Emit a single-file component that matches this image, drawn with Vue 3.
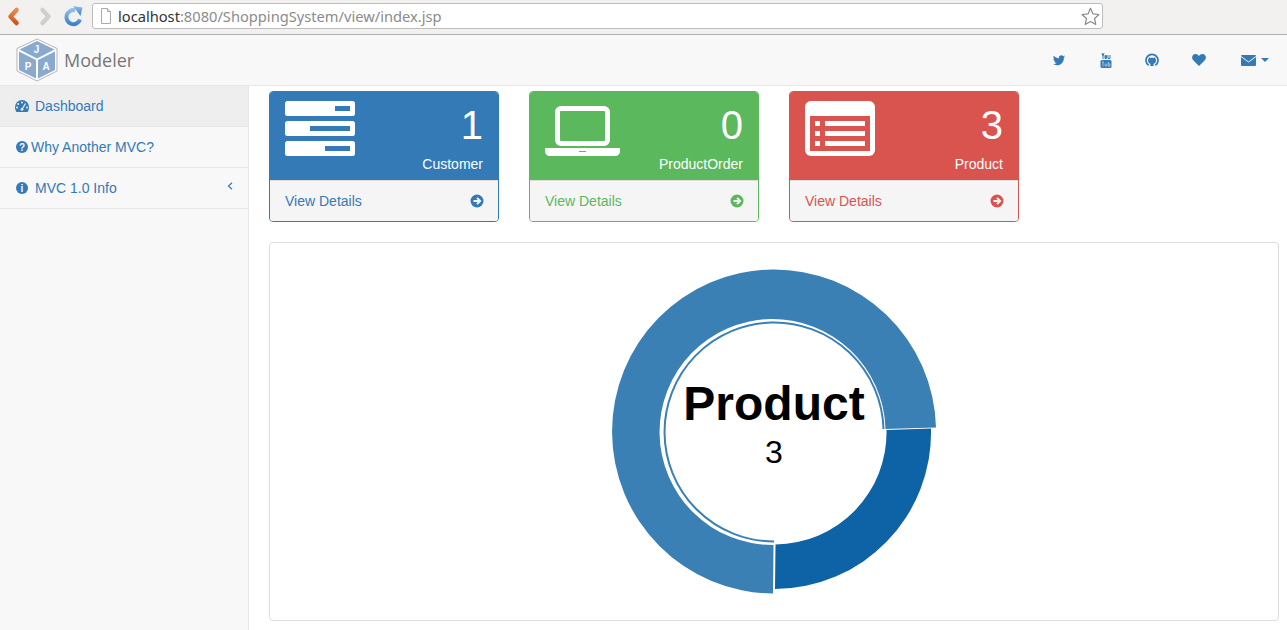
<script setup>
const cards = [
  { kind: 'customer', count: 1, label: 'Customer', cls: 'blue' },
  { kind: 'order', count: 0, label: 'ProductOrder', cls: 'green' },
  { kind: 'product', count: 3, label: 'Product', cls: 'red' }
]
const productRows = [20, 30, 40]
</script>

<template>
  <div class="page">
    <div class="toolbar">
      <svg class="nav-icons" width="84" height="24" viewBox="0 0 84 24">
        <defs>
          <linearGradient id="backGrad" x1="0" y1="0" x2="0" y2="1">
            <stop offset="0" stop-color="#e98a4c" />
            <stop offset="1" stop-color="#d2541f" />
          </linearGradient>
          <linearGradient id="reloadGrad" x1="0" y1="0" x2="0" y2="1">
            <stop offset="0" stop-color="#8fbde6" />
            <stop offset="1" stop-color="#3f82c8" />
          </linearGradient>
        </defs>
        <path d="M12.5 5 L6.5 11.5 L12.5 18" fill="none" stroke="url(#backGrad)" stroke-width="4.5" stroke-linejoin="round" stroke-linecap="round" />
        <path d="M38.5 5 L44.5 11.5 L38.5 18" fill="none" stroke="#d0cfcc" stroke-width="4.5" stroke-linejoin="round" stroke-linecap="round" />
        <path d="M76 14.5 A7 7 0 1 1 71 5.3" fill="none" stroke="url(#reloadGrad)" stroke-width="4" />
        <path d="M69 1 L78.5 2.5 L76.5 11 Z" fill="url(#reloadGrad)" />
      </svg>
      <div class="address">
        <svg class="file-icon" width="10" height="16" viewBox="0 0 10 16">
          <path d="M.5.5H6.5L9.5 3.5V15.5H.5Z" fill="#fff" stroke="#a9a9a9" />
          <path d="M6.5.5V3.5H9.5" fill="#e8e8e8" stroke="#a9a9a9" />
        </svg>
        <span class="url"><span class="host">localhost</span>:8080/ShoppingSystem/view/index.jsp</span>
        <svg class="star" width="19" height="19" viewBox="0 0 19 19">
          <path d="M9.5 1.3 L12 6.9 L18 7.5 L13.5 11.5 L14.8 17.5 L9.5 14.4 L4.2 17.5 L5.5 11.5 L1 7.5 L7 6.9 Z" fill="#fff" stroke="#8a8a8a" stroke-width="1.2" stroke-linejoin="round" />
        </svg>
      </div>
    </div>

    <nav class="navbar">
      <div class="brand">
        <svg width="44" height="44" viewBox="0 0 44 44">
          <path d="M22 1 L42 10.5 L42 33 L22 43 L2 33 L2 10.5 Z" fill="#fff" stroke="#b5b5b5" />
          <path d="M22 3 L39.5 11.5 L22 20.5 L4.5 11.5 Z" fill="#89a9cf" />
          <path d="M4 13.5 L21 22 L21 40.5 L4 32 Z" fill="#89a9cf" />
          <path d="M23 22 L40 13.5 L40 32 L23 40.5 Z" fill="#89a9cf" />
          <text x="21.5" y="14.5" class="cube-letter">J</text>
          <text x="13" y="32" class="cube-letter">P</text>
          <text x="31" y="32" class="cube-letter">A</text>
        </svg>
        <span class="brand-name">Modeler</span>
      </div>
      <div class="nav-links">
        <svg class="twitter" width="14" height="14" viewBox="0 0 24 24">
          <path d="M22.46,6C21.69,6.35 20.86,6.58 20,6.69C20.88,6.16 21.56,5.32 21.88,4.31C21.05,4.81 20.13,5.16 19.16,5.36C18.37,4.5 17.26,4 16,4C13.65,4 11.73,5.92 11.73,8.29C11.73,8.63 11.77,8.96 11.84,9.27C8.28,9.09 5.11,7.38 3,4.79C2.63,5.42 2.42,6.16 2.42,6.94C2.42,8.43 3.17,9.75 4.33,10.5C3.62,10.5 2.96,10.3 2.38,10C2.38,10 2.38,10 2.38,10.03C2.38,12.11 3.86,13.85 5.82,14.24C5.46,14.34 5.08,14.39 4.69,14.39C4.42,14.39 4.15,14.36 3.89,14.31C4.43,16 6,17.26 7.89,17.29C6.43,18.45 4.58,19.13 2.56,19.13C2.22,19.13 1.88,19.11 1.54,19.07C3.44,20.29 5.7,21 8.12,21C16,21 20.33,14.46 20.33,8.79C20.33,8.6 20.33,8.42 20.32,8.23C21.16,7.63 21.88,6.87 22.46,6Z" />
        </svg>
        <svg class="youtube" width="12" height="15" viewBox="0 0 12 15">
          <path d="M2 0 L3 3 L4 0 M3 3 V6" fill="none" stroke="#337ab7" stroke-width="1" />
          <rect x="4.5" y="2" width="2.5" height="4" rx="1" fill="#337ab7" />
          <path d="M8 2 V5.5 H10 V2" fill="none" stroke="#337ab7" stroke-width="1" />
          <rect x="0.5" y="7" width="11" height="8" rx="1.5" fill="#337ab7" />
          <path d="M2 9 H4 M3 9 V13.5 M5.2 10.5 V13 H6.8 V10.5 M8.3 8.7 V13.2 H10 V10.8 H8.3" fill="none" stroke="#b9d0e6" stroke-width=".8" />
        </svg>
        <svg class="github" width="14" height="14" viewBox="0 0 14 14">
          <path d="M3.6 12.3 A6 6 0 1 1 10.4 12.3" fill="none" stroke="#337ab7" stroke-width="1.7" />
          <path d="M5.4 13 V10.8 C3.6 10.4 3 9.2 3 7.6 C3 6.9 3.2 6.3 3.7 5.8 C3.6 5.3 3.6 4.7 3.9 4.2 C4.5 4.2 5 4.5 5.5 4.9 C6.4 4.7 7.6 4.7 8.5 4.9 C9 4.5 9.5 4.2 10.1 4.2 C10.4 4.7 10.4 5.3 10.3 5.8 C10.8 6.3 11 6.9 11 7.6 C11 9.2 10.4 10.4 8.6 10.8 V13 Z" />
        </svg>
        <svg class="heart" width="14" height="12" viewBox="0 0 14 12">
          <path d="M7 12 L1 6 C-1 3.5 .5 0 3.5 0 C5 0 6.2 .8 7 2 C7.8 .8 9 0 10.5 0 C13.5 0 15 3.5 13 6 Z" />
        </svg>
        <div class="mail">
          <svg width="15" height="11" viewBox="0 0 15 11">
            <rect width="15" height="11" rx="1" fill="#337ab7" />
            <path d="M0 1.5 L7.5 7 L15 1.5" fill="none" stroke="#f8f8f8" stroke-width="1" />
          </svg>
          <span class="caret"></span>
        </div>
      </div>
    </nav>

    <div class="main">
      <aside class="sidebar">
        <a class="side-item active">
          <svg class="side-icon" width="14" height="12" viewBox="0 0 14 12">
            <path d="M7 0 A7 7 0 0 1 14 7 C14 9 13.5 10.5 12.6 12 H1.4 C.5 10.5 0 9 0 7 A7 7 0 0 1 7 0 Z" fill="#337ab7" />
            <circle cx="7" cy="2.5" r="1" fill="#eee" />
            <circle cx="3.2" cy="4" r="1" fill="#eee" />
            <circle cx="2" cy="7.5" r="1" fill="#eee" />
            <circle cx="12" cy="7.5" r="1" fill="#eee" />
            <path d="M10.5 3.5 L7.5 8.5" stroke="#eee" stroke-width="1.3" />
            <circle cx="7" cy="9.3" r="1.4" fill="#eee" />
          </svg>
          <span class="gap-six">Dashboard</span>
        </a>
        <a class="side-item">
          <svg class="side-icon small" width="12" height="12" viewBox="0 0 12 12">
            <circle cx="6" cy="6" r="6" fill="#337ab7" />
            <text x="6" y="9.6" class="badge-glyph">?</text>
          </svg>
          <span class="gap-three">Why Another MVC?</span>
        </a>
        <a class="side-item">
          <svg class="side-icon small" width="12" height="12" viewBox="0 0 12 12">
            <circle cx="6" cy="6" r="6" fill="#337ab7" />
            <text x="6" y="9.6" class="badge-glyph">i</text>
          </svg>
          <span class="gap-seven">MVC 1.0 Info</span>
          <svg class="angle" width="6" height="8" viewBox="0 0 6 8">
            <path d="M5 .8 L1.5 4 L5 7.2" fill="none" stroke="#337ab7" stroke-width="1.2" />
          </svg>
        </a>
      </aside>

      <section class="content">
        <div class="cards">
          <div v-for="card in cards" :key="card.kind" class="card" :class="card.cls">
            <div class="card-head">
              <svg class="card-icon" width="76" height="55" viewBox="0 0 76 55">
                <template v-if="card.kind === 'customer'">
                  <rect width="70" height="15" rx="2.5" fill="#fff" />
                  <rect y="20" width="70" height="15" rx="2.5" fill="#fff" />
                  <rect y="40" width="70" height="15" rx="2.5" fill="#fff" />
                  <rect x="50" y="5" width="15" height="5" fill="#337ab7" />
                  <rect x="25" y="25" width="40" height="5" fill="#337ab7" />
                  <rect x="40" y="45" width="25" height="5" fill="#337ab7" />
                </template>
                <template v-else-if="card.kind === 'order'">
                  <rect x="12.5" y="7.5" width="50" height="35" rx="3.5" fill="none" stroke="#fff" stroke-width="5" />
                  <path d="M0 47 H75 V50 C75 53 73 55 70 55 H5 C2 55 0 53 0 50 Z" fill="#fff" />
                  <rect x="34" y="50" width="7" height="1" fill="#5cb85c" />
                </template>
                <template v-else>
                  <rect width="70" height="55" rx="6" fill="#fff" />
                  <rect x="5" y="15" width="60" height="35" fill="#d9534f" />
                  <template v-for="y in productRows" :key="y">
                    <rect x="10" :y="y" width="5" height="5" fill="#fff" />
                    <rect x="20" :y="y" width="40" height="5" fill="#fff" />
                  </template>
                </template>
              </svg>
              <div class="card-text">
                <div class="count">{{ card.count }}</div>
                <div class="label">{{ card.label }}</div>
              </div>
            </div>
            <div class="card-foot">
              <span>View Details</span>
              <svg class="go" width="14" height="14" viewBox="0 0 14 14">
                <circle cx="7" cy="7" r="6.5" class="go-disc" />
                <path d="M3.5 7 H10 M7 3.8 L10.2 7 L7 10.2" fill="none" stroke="#f5f5f5" stroke-width="1.9" />
              </svg>
            </div>
          </div>
        </div>

        <div class="chart-panel">
          <svg width="340" height="340" viewBox="0 0 340 340">
            <path d="M332 165.5 A162 162 0 1 0 169 331.5 L169.5 283 A113 113 0 1 1 281.5 167 Z" fill="#3b80b4" />
            <path d="M282.5 168 L327 166.5 A156.5 156.5 0 0 1 171 327 L171.5 282.5 A112 112 0 0 0 282.5 168 Z" fill="#0d63a6" />
            <path d="M279.5 167 A109.5 109.5 0 1 0 170 279.5" fill="none" stroke="#3b80b4" stroke-width="2" />
            <text x="170" y="158" class="center-title">Product</text>
            <text x="170" y="201" class="center-value">3</text>
          </svg>
        </div>
      </section>
    </div>
  </div>
</template>

<style scoped>
.page {
  width: 1287px;
  height: 630px;
  display: flex;
  flex-direction: column;
  overflow: hidden;
  background: #fff;
  font-family: "Liberation Sans", Arial, sans-serif;
  font-size: 14px;
  color: #333;
}

.toolbar {
  height: 34px;
  flex: none;
  display: flex;
  align-items: center;
  background: #f2f1f0;
  border-bottom: 1px solid #b0b0b0;
  box-sizing: content-box;
}

.nav-icons {
  flex: none;
  margin-left: 4px;
  margin-right: 4px;
}

.address {
  width: 1011px;
  height: 26px;
  margin-bottom: 2px;
  display: flex;
  align-items: center;
  box-sizing: border-box;
  padding: 0 2px 0 8px;
  background: #fff;
  border: 1px solid #bdbdbd;
  border-radius: 3px;
}

.file-icon {
  flex: none;
}

.url {
  margin-left: 7px;
  flex: 1;
  font-family: "Noto Sans", "Open Sans", sans-serif;
  font-size: 14.66px;
  color: #8b8b8b;
  white-space: nowrap;
}

.host {
  color: #2e3436;
}

.star {
  flex: none;
}

.navbar {
  height: 50px;
  flex: none;
  display: flex;
  align-items: center;
  justify-content: space-between;
  background: #f8f8f8;
  border-bottom: 1px solid #e7e7e7;
}

.brand {
  display: flex;
  align-items: center;
  margin-left: 15px;
}

.brand-name {
  margin-left: 5px;
  font-family: "Open Sans", sans-serif;
  font-size: 18px;
  color: #777;
}

.cube-letter {
  font-family: "Liberation Sans", sans-serif;
  font-size: 10px;
  font-weight: bold;
  fill: #fff;
  text-anchor: middle;
}

.nav-links {
  display: flex;
  align-items: center;
  margin-right: 18px;
}

.nav-links svg {
  fill: #337ab7;
  flex: none;
}

.twitter {
  margin-right: 34px;
}

.youtube {
  margin-right: 33px;
}

.github {
  margin-right: 33px;
}

.heart {
  margin-right: 35px;
}

.mail {
  display: flex;
  align-items: center;
}

.caret {
  width: 0;
  height: 0;
  margin-left: 5px;
  border-top: 4px solid #337ab7;
  border-left: 4px solid transparent;
  border-right: 4px solid transparent;
}

.main {
  flex: 1;
  display: flex;
  min-height: 0;
}

.sidebar {
  width: 249px;
  flex: none;
  box-sizing: border-box;
  background: #f8f8f8;
  border-right: 1px solid #e7e7e7;
}

.side-item {
  height: 41px;
  box-sizing: border-box;
  display: flex;
  align-items: center;
  padding-left: 15px;
  color: #337ab7;
  border-bottom: 1px solid #e7e7e7;
}

.side-item.active {
  background: #eee;
}

.side-icon {
  flex: none;
}

.side-icon.small {
  margin-left: 1px;
}

.badge-glyph {
  font-family: "Liberation Sans", sans-serif;
  font-size: 10px;
  font-weight: bold;
  fill: #f8f8f8;
  text-anchor: middle;
}

.gap-six {
  margin-left: 6px;
}

.gap-three {
  margin-left: 3px;
}

.gap-seven {
  margin-left: 7px;
}

.angle {
  margin-left: auto;
  margin-right: 15px;
  margin-bottom: 4px;
}

.content {
  flex: 1;
  min-width: 0;
  padding: 5px 8px 0 20px;
}

.cards {
  display: flex;
  gap: 30px;
}

.card {
  width: 230px;
  box-sizing: border-box;
  border: 1px solid;
  border-radius: 4px;
  overflow: hidden;
}

.card-head {
  height: 88px;
  box-sizing: border-box;
  display: flex;
  justify-content: space-between;
  padding: 9px 15px 0;
  color: #fff;
}

.card-text {
  text-align: right;
}

.count {
  font-size: 40px;
  line-height: 44px;
  margin-top: 2px;
}

.label {
  margin-top: 9px;
  line-height: 16px;
}

.card-foot {
  height: 41px;
  box-sizing: border-box;
  display: flex;
  align-items: center;
  justify-content: space-between;
  padding: 0 14px 0 15px;
  background: #f5f5f5;
  border-top: 1px solid #ddd;
}

.blue {
  border-color: #337ab7;
}

.blue .card-head {
  background: #337ab7;
}

.blue .card-foot {
  color: #337ab7;
}

.blue .go-disc {
  fill: #337ab7;
}

.green {
  border-color: #5cb85c;
}

.green .card-head {
  background: #5cb85c;
}

.green .card-foot {
  color: #5cb85c;
}

.green .go-disc {
  fill: #5cb85c;
}

.red {
  border-color: #d9534f;
}

.red .card-head {
  background: #d9534f;
}

.red .card-foot {
  color: #d9534f;
}

.red .go-disc {
  fill: #d9534f;
}

.chart-panel {
  height: 379px;
  box-sizing: border-box;
  margin-top: 20px;
  display: flex;
  align-items: center;
  justify-content: center;
  background: #fff;
  border: 1px solid #ddd;
  border-radius: 4px;
}

.center-title {
  font-family: "Liberation Sans", sans-serif;
  font-size: 48px;
  font-weight: bold;
  fill: #000;
  text-anchor: middle;
}

.center-value {
  font-family: "Liberation Sans", sans-serif;
  font-size: 32px;
  fill: #000;
  text-anchor: middle;
}
</style>
